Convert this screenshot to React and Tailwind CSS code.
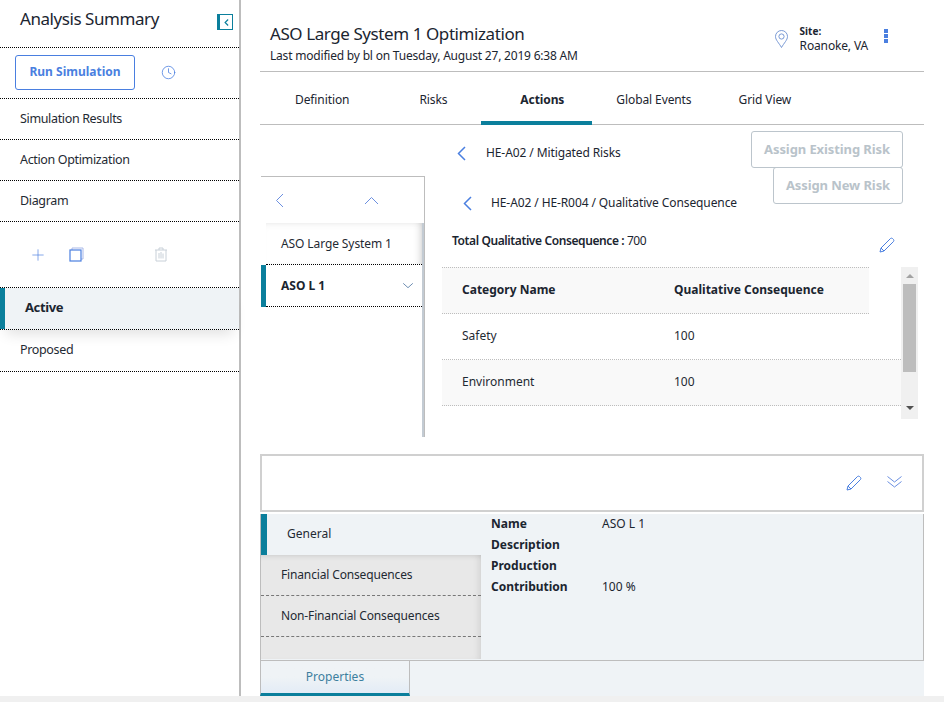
import React from "react";
import { Clock, Plus } from "lucide-react";

const dots = "border-b border-dotted border-black";

function Chevron({ className, dir = "left", width = 1.5 }) {
  const paths = {
    left: "M8 1 L1.5 7.5 L8 14",
    up: "M1 8 L7.5 1.5 L14 8",
    down: "M1 1.5 L6.5 6.5 L12 1.5",
  };
  const box = { left: "0 0 9 15", up: "0 0 15 9", down: "0 0 13 8" };
  return (
    <svg viewBox={box[dir]} fill="none" stroke="currentColor" strokeWidth={width} className={className}>
      <path d={paths[dir]} />
    </svg>
  );
}

function PencilIcon({ className }) {
  return (
    <svg viewBox="0 0 16 16" fill="none" stroke="#4a7fe0" strokeWidth="1" className={className}>
      <path d="M1 15 L2 11 L11.5 1.5 Q12.5 .8 13.5 1.5 L14.5 2.5 Q15.2 3.5 14.5 4.5 L5 14 Z M2 11 L5 14" />
    </svg>
  );
}

function SideLink({ label, className = "h-[41px]" }) {
  return (
    <div className={`pl-5 flex items-center text-[12.5px] tracking-[-0.35px] text-[#1f2a33] ${className} ${dots}`}>
      {label}
    </div>
  );
}

function Sidebar() {
  return (
    <aside className="w-[241px] -mr-px shrink-0 border-r-2 border-[#bdbdbd] h-[702px]">
      <div className={`h-[48px] pl-5 pr-[6px] pt-[6px] flex items-start justify-between ${dots}`}>
        <span className="text-[17px] leading-[26px] tracking-[-0.44px] text-[#1b2530]">Analysis Summary</span>
        <span className="w-4 h-4 mt-[8px] border border-[#0b7f9c] border-l-[3px] flex items-center justify-center">
          <Chevron dir="left" width={2.5} className="w-[5px] h-[7px] text-[#0b7f9c]" />
        </span>
      </div>
      <div className={`h-[51px] pl-[15px] pb-[2px] flex items-center gap-[26px] ${dots}`}>
        <button className="w-[120px] h-[35px] border border-[#4a7fe0] rounded-[3px] text-[12px] font-bold text-[#4a7fe0]">
          Run Simulation
        </button>
        <Clock size={15} strokeWidth={1.25} className="text-[#4a7fe0]" />
      </div>
      <SideLink label="Simulation Results" />
      <SideLink label="Action Optimization" />
      <SideLink label="Diagram" />
      <div className={`h-[66px] pl-[29px] flex items-center ${dots}`}>
        <Plus size={18} strokeWidth={0.9} className="text-[#4a7fe0]" />
        <svg viewBox="0 0 15 15" fill="none" className="w-[15px] h-[15px] ml-[22px]">
          <path d="M3 3 V1 H14 V12 H12" stroke="#a9b8e8" strokeWidth="1" />
          <rect x="1" y="3" width="11" height="11" stroke="#4a7fe0" strokeWidth="1.2" />
        </svg>
        <svg viewBox="0 0 14 15" fill="none" stroke="#c8d0d8" strokeWidth="1" className="w-[14px] h-[15px] ml-[70px]">
          <path d="M1 3 H13 M5 3 V1 H9 V3 M2 3 V14 H12 V3 M5 6 V11.5 M7 5 V11.5 M9 6.5 V11.5" />
        </svg>
      </div>
      <div className={`h-[42px] flex items-stretch text-[13px] font-bold tracking-[-0.4px] text-[#1b2530] bg-[#eff3f6] shadow-[0_10px_14px_-6px_rgba(0,0,0,0.12)] ${dots}`}>
        <span className="w-[5px] bg-[#0b7f9c]" />
        <span className="pl-[20px] pb-[2px] flex items-center">Active</span>
      </div>
      <SideLink label="Proposed" className="h-[42px]" />
    </aside>
  );
}

function Header() {
  return (
    <div className="h-[72px] mx-5 border-b border-[#bdbdbd] flex">
      <div className="pl-[10px] pt-[22px] flex-1">
        <div className="text-[17px] leading-[24px] tracking-[-0.42px] text-[#1b2530]">ASO Large System 1 Optimization</div>
        <div className="text-[12px] leading-[20px] tracking-[-0.2px] text-[#1b2530]">Last modified by bl on Tuesday, August 27, 2019 6:38 AM</div>
      </div>
      <div className="flex items-start pt-[24px] pr-[36px]">
        <svg viewBox="0 0 13 18" fill="none" stroke="#6b8fd0" strokeWidth="0.9" className="w-[13px] h-[18px] mt-[6px] mr-[12px]">
          <path d="M6.5 17.5 C4 13 .5 10 .5 6.5 A6 6 0 0 1 12.5 6.5 C12.5 10 9 13 6.5 17.5 Z" />
          <circle cx="6.5" cy="6.5" r="2.6" />
        </svg>
        <div className="mr-[16px]">
          <div className="text-[10px] leading-[14px] font-bold text-[#1b2530]">Site:</div>
          <div className="text-[12px] leading-[16px] tracking-[-0.15px] text-[#1b2530]">Roanoke, VA</div>
        </div>
        <div className="flex flex-col gap-px mt-[5px]">
          <span className="w-[4px] h-[4px] bg-[#4a7fe0]" />
          <span className="w-[4px] h-[4px] bg-[#4a7fe0]" />
          <span className="w-[4px] h-[4px] bg-[#4a7fe0]" />
        </div>
      </div>
    </div>
  );
}

function Tabs() {
  return (
    <div className="h-[53px] mx-5 border-b border-[#bdbdbd] flex items-stretch text-[12px] tracking-[-0.1px] text-[#1b2530]">
      <span className="ml-[35px] pt-[3px] flex items-center">Definition</span>
      <span className="ml-[70px] pt-[3px] flex items-center">Risks</span>
      <span className="ml-[34px] w-[111px] h-[53px] pl-[39px] pt-[6px] flex items-center font-bold border-b-[4px] border-[#0b7f9c]">Actions</span>
      <span className="ml-[24px] pt-[3px] flex items-center">Global Events</span>
      <span className="ml-[47px] pt-[3px] flex items-center">Grid View</span>
    </div>
  );
}

function TreePanel() {
  return (
    <div className="w-[164px] h-[261px] mt-[51px] ml-[21px] shrink-0 border-t border-r border-[#bdbdbd] flex flex-col">
      <div className="h-[46px] flex items-center pl-[14px] pr-[45px] justify-between text-[#6b8fe0]">
        <Chevron dir="left" width={1} className="w-[9px] h-[15px]" />
        <Chevron dir="up" width={1} className="w-[15px] h-[9px]" />
      </div>
      <div className="flex-1 border-r-2 border-[#c3cbd3]">
        <div className={`h-[42px] ml-[5px] pl-[15px] flex items-center text-[12px] tracking-[-0.1px] text-[#1f2a33] shadow-[inset_-6px_0_8px_-6px_rgba(0,0,0,0.25),inset_0_6px_8px_-6px_rgba(0,0,0,0.08)] ${dots}`}>
          ASO Large System 1
        </div>
        <div className="h-[42px] flex items-stretch text-[12px] font-bold text-[#1b2530]">
          <span className="w-[5px] bg-[#0b7f9c]" />
          <span className={`flex-1 pl-[15px] pr-[8px] flex items-center justify-between ${dots}`}>
            ASO L 1
            <Chevron dir="down" width={1} className="w-[12px] h-[7px] text-[#5b7fa8]" />
          </span>
        </div>
      </div>
    </div>
  );
}

function ConsequenceTable() {
  const rows = [
    ["Safety", "100", ""],
    ["Environment", "100", "bg-[#f9f9f9]"],
  ];
  return (
    <div className="flex">
      <div className="w-[459px]">
        <div className="h-[47px] pb-[2px] flex items-center bg-[#f9f9f9] w-[427px] border-y border-dotted border-[#bdbdbd] text-[12px] font-bold text-[#1b2530]">
          <span className="w-[232px] pl-[20px]">Category Name</span>
          <span>Qualitative Consequence</span>
        </div>
        {rows.map(([name, value, bg]) => (
          <div key={name} className={`h-[46px] pb-[2px] flex items-center border-b border-dotted border-[#bdbdbd] text-[12px] text-[#1f2a33] ${bg}`}>
            <span className="w-[232px] pl-[20px]">{name}</span>
            <span>{value}</span>
          </div>
        ))}
      </div>
      <div className="w-[17px] h-[152px] bg-[#f0f0f0] flex flex-col items-center pt-[7px]">
        <span className="w-0 h-0 border-x-[4px] border-x-transparent border-b-[4px] border-b-[#a3a3a3]" />
        <span className="w-[13px] h-[88px] bg-[#bdbdbd] mt-[6px]" />
        <span className="w-0 h-0 border-x-[4px] border-x-transparent border-t-[4px] border-t-[#505050] mt-[34px]" />
      </div>
    </div>
  );
}

function RiskPanel() {
  return (
    <div className="flex-1 pl-[17px]">
      <div className="flex items-start justify-between pr-[41px] pt-[6px] pl-[15px] h-[42px]">
        <div className="flex items-center pt-[13px] text-[12px] tracking-[-0.1px] text-[#1b2530]">
          <Chevron dir="left" className="w-[9px] h-[15px] text-[#4a7fe0]" />
          <span className="ml-[20px]">HE-A02 / Mitigated Risks</span>
        </div>
        <button className="w-[152px] h-[37px] border border-[#bcc5cc] rounded-[3px] text-[13px] font-bold tracking-[-0.1px] text-[#b9c3ca]">
          Assign Existing Risk
        </button>
      </div>
      <div className="flex items-start justify-between pr-[41px] pl-[21px] h-[48px]">
        <div className="flex items-center pt-[27px] text-[12px] tracking-[-0.1px] text-[#1b2530]">
          <Chevron dir="left" className="w-[9px] h-[15px] text-[#4a7fe0]" />
          <span className="ml-[19px]">HE-A02 / HE-R004 / Qualitative Consequence</span>
        </div>
        <button className="w-[130px] h-[37px] border border-[#bcc5cc] rounded-[3px] text-[13px] font-bold tracking-[-0.1px] text-[#b9c3ca]">
          Assign New Risk
        </button>
      </div>
      <div className="h-[52px] flex justify-between pl-[10px] pr-[49px] text-[12px] text-[#1b2530] pt-[17px]">
        <span className="tracking-[-0.4px]"><span className="font-semibold">Total Qualitative Consequence :</span> 700</span>
        <PencilIcon className="w-[16px] h-[16px] mt-[5px]" />
      </div>
      <ConsequenceTable />
    </div>
  );
}

function DetailPanel() {
  const fields = [
    ["Name", "ASO L 1"],
    ["Description", ""],
    ["Production", ""],
    ["Contribution", "100 %"],
  ];
  return (
    <div className="mx-5 mt-[15px]">
      <div className="h-[58px] w-[664px] border-2 border-[#d0d0d0] flex items-center justify-end pr-[20px] gap-[25px] text-[#6b8fe0]">
        <PencilIcon className="w-[16px] h-[16px]" />
        <svg viewBox="0 0 15 12" fill="none" stroke="currentColor" strokeWidth="1" className="w-[15px] h-[12px] -mt-[2px]">
          <path d="M.5 .5 L7.5 6 L14.5 .5 M.5 5.5 L7.5 11 L14.5 5.5" />
        </svg>
      </div>
      <div className="flex h-[147px] bg-[#eff3f6] mt-[2px] w-[664px] border-x border-b border-[#bdbdbd]">
        <div className="w-[220px] shrink-0">
          <div className="h-[41px] pl-[20px] pb-[2px] flex items-center text-[12px] text-[#1f2a33] border-l-[6px] border-[#0b7f9c]">General</div>
          <div className="h-[104px] bg-[#e8e8e8] shadow-[inset_-6px_0_8px_-6px_rgba(0,0,0,0.15),inset_0_6px_6px_-6px_rgba(0,0,0,0.15)] text-[12px] tracking-[-0.15px] text-[#1f2a33]">
            <div className="h-[41px] pl-[20px] flex items-center border-b border-dashed border-[#777777]">Financial Consequences</div>
            <div className="h-[41px] pl-[20px] flex items-center border-b border-dashed border-[#777777]">Non-Financial Consequences</div>
          </div>
        </div>
        <div className="pl-[10px] -mt-px text-[12px] text-[#1b2530]">
          {fields.map(([label, value]) => (
            <div key={label} className="h-[21px] flex items-center">
              <span className="w-[111px] font-bold">{label}</span>
              <span>{value}</span>
            </div>
          ))}
        </div>
      </div>
      <div className="flex h-[35px] w-[664px] bg-[#eff3f6]">
        <div className="w-[150px] h-[35px] flex items-center justify-center text-[12px] text-[#3d7f9f] border-x border-[#bdbdbd] border-b-[3px] border-b-[#0b7f9c] bg-gradient-to-b from-[#eff3f6] via-[#eff3f6] to-[#e3ecf6]">
          Properties
        </div>
      </div>
    </div>
  );
}

export default function App() {
  return (
    <div className="w-[944px] h-[702px] overflow-hidden bg-white flex font-['Noto_Sans',sans-serif] relative">
      <Sidebar />
      <main className="flex-1 min-w-0">
        <Header />
        <Tabs />
        <div className="flex h-[314px]">
          <TreePanel />
          <RiskPanel />
        </div>
        <DetailPanel />
      </main>
      <div className="absolute left-0 bottom-0 w-full h-[6px] bg-[#f0f0f0]" />
    </div>
  );
}
